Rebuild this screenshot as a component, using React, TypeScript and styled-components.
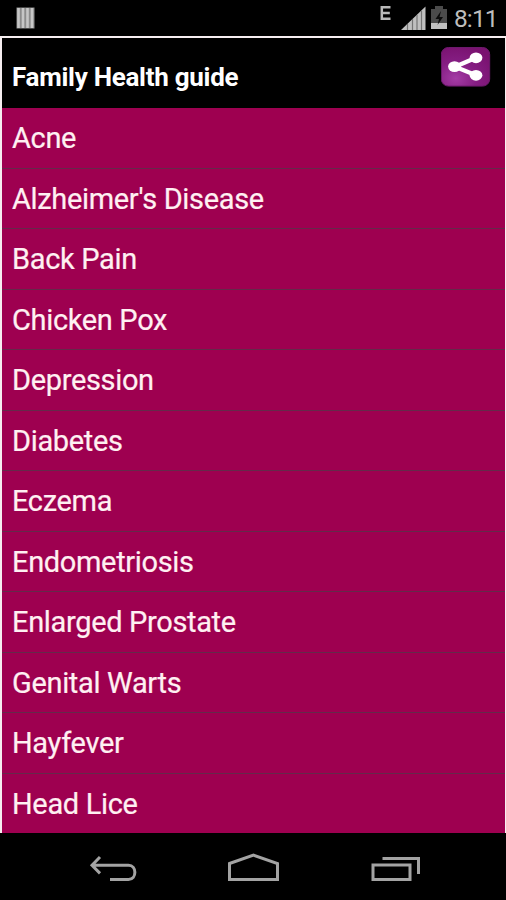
import React from 'react';
import styled, { createGlobalStyle } from 'styled-components';

const GlobalStyle = createGlobalStyle`
  * { box-sizing: border-box; }
  html, body { margin: 0; background: #000; }
  body { overflow: hidden; font-family: Roboto, sans-serif; }
`;

const Screen = styled.div`
  width: 506px;
  height: 900px;
  display: flex;
  flex-direction: column;
  background: #000;
  color: #fff;
`;

const StatusBar = styled.header`
  height: 36px;
  flex: none;
  display: flex;
  align-items: flex-start;
  justify-content: space-between;
`;

const NotificationIcon = styled.svg`
  margin: 7px 0 0 16px;
`;

const StatusIcons = styled.div`
  display: flex;
  align-items: flex-start;
  width: 126px;
`;

const SystemIcons = styled.svg`
  flex: none;
`;

const Clock = styled.span`
  margin-left: 2px;
  font-size: 24.5px;
  letter-spacing: -0.9px;
  line-height: 38px;
  color: #bdbdbd;
  white-space: nowrap;
`;

const Content = styled.main`
  height: 797px;
  flex: none;
  display: flex;
  flex-direction: column;
  border: solid #f6eef0;
  border-width: 2px 1px 0 2px;
  overflow: hidden;
`;

const TitleBar = styled.div`
  height: 70px;
  flex: none;
  display: flex;
  align-items: flex-start;
  justify-content: space-between;
  padding: 9px 14px 0 10px;
`;

const Title = styled.h1`
  margin: 15px 0 0;
  font-size: 26px;
  font-weight: 700;
  letter-spacing: -0.28px;
  line-height: 30px;
  white-space: nowrap;
`;

const ShareButton = styled.button`
  display: block;
  padding: 0;
  border: 0;
  background: none;
`;

const List = styled.ul`
  margin: 0;
  padding: 0;
  list-style: none;
  background: #9e0050;
`;

const Row = styled.li`
  height: 60px;
  padding-left: 10px;
  border-bottom: 1px solid #65294a;
  font-size: 29px;
  letter-spacing: -0.34px;
  line-height: 60px;
  color: #fff0f2;
  -webkit-text-stroke: 0.2px #fff0f2;
  white-space: nowrap;

  &:nth-child(odd) {
    height: 61px;
  }
`;

const NavBar = styled.nav`
  flex: 1;
  display: flex;
  justify-content: center;
`;

const topics = [
  'Acne', "Alzheimer's Disease", 'Back Pain', 'Chicken Pox', 'Depression', 'Diabetes',
  'Eczema', 'Endometriosis', 'Enlarged Prostate', 'Genital Warts', 'Hayfever', 'Head Lice',
];

export default function App() {
  return (
    <Screen>
      <GlobalStyle />
      <StatusBar>
        <NotificationIcon width="19" height="22" viewBox="0 0 19 22">
          <rect x="0.5" y="0.5" width="18" height="21" fill="#8c8c8c" />
          <path d="M2.5 1v20M7 1v20M11.5 1v20M16 1v20" stroke="#c6c6c6" strokeWidth="2.6" />
        </NotificationIcon>
        <StatusIcons>
          <SystemIcons width="72" height="36" viewBox="380 0 72 36">
            <path d="M390.5 7.2h-8.7v11.6h8.7M382 13h7.8" fill="none" stroke="#b8b8b8" strokeWidth="2.5" />
            <path d="M401 30L425.5 6.5V30z" fill="#c0c0c0" />
            <path d="M407.5 24v6M412.5 19v11M417 15v15M421.5 11v19" stroke="#757575" strokeWidth="1.2" />
            <path d="M435 6h8v3h4v20h-16V9h4z" fill="#4b4b4b" />
            <path d="M431 23h16v6h-16z" fill="#c0c0c0" />
            <path d="M441 11l-5.5 8h3.5l-1.5 6 5.5-8h-3.5z" fill="#0b0b0b" />
          </SystemIcons>
          <Clock>8:11</Clock>
        </StatusIcons>
      </StatusBar>
      <Content>
        <TitleBar>
          <Title>Family Health guide</Title>
          <ShareButton aria-label="Share">
            <svg width="50" height="40" viewBox="0 0 50 40" display="block">
              <defs>
                <radialGradient id="shareFill" cx="30%" cy="80%" r="85%">
                  <stop offset="0" stopColor="#a43ca5" />
                  <stop offset="0.5" stopColor="#851e83" />
                  <stop offset="1" stopColor="#7a1270" />
                </radialGradient>
              </defs>
              <rect x="0.3" y="0.5" width="48.4" height="38.6" rx="7" fill="url(#shareFill)" stroke="#6c1a6c" />
              <path d="M35 10.8L14 19.8l21 8.5" fill="none" stroke="#fff" strokeWidth="4.2" />
              <g fill="#fff">
                <ellipse cx="35" cy="10.8" rx="6.4" ry="5.4" />
                <ellipse cx="13.5" cy="19.6" rx="6.4" ry="5.4" />
                <ellipse cx="35" cy="28.3" rx="6.4" ry="5.4" />
              </g>
            </svg>
          </ShareButton>
        </TitleBar>
        <List>
          {topics.map((topic) => <Row key={topic}>{topic}</Row>)}
        </List>
      </Content>
      <NavBar>
        <svg width="506" height="66" viewBox="0 833 506 66" fill="none" stroke="#a3a3a3" strokeWidth="3">
          <path d="M100 857l-8 8.2 8 8.2M92 865.2h36.5c8.5 0 8.5 14.3 0 14.3H110" />
          <path d="M229.5 863.5l24-8.3 24 8.3v16h-48z" />
          <path d="M373 865h37v14.5h-37zM382.5 858.5h36V874" />
        </svg>
      </NavBar>
    </Screen>
  );
}
